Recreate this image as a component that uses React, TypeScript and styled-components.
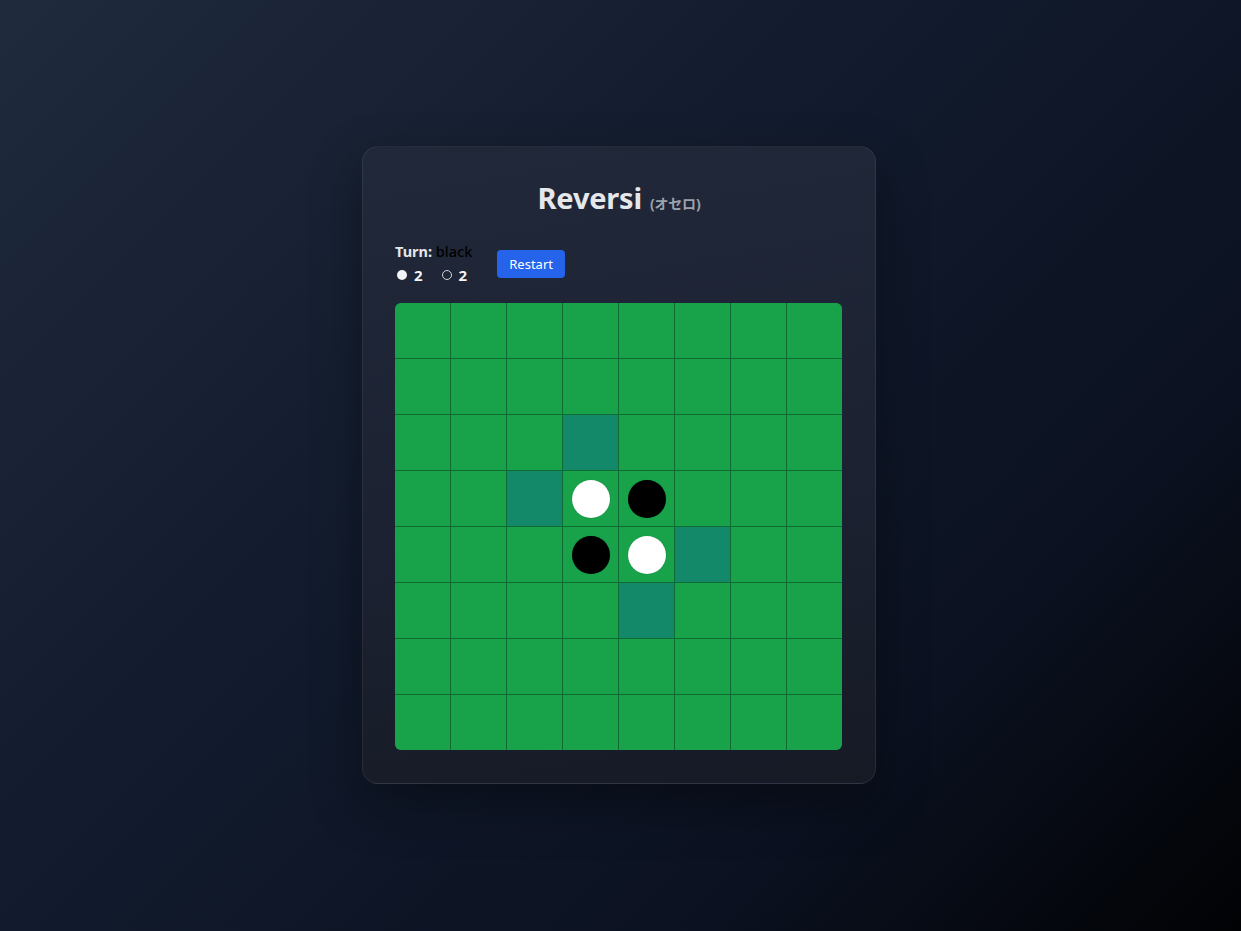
import React from "react";
import styled, { createGlobalStyle } from "styled-components";

const GlobalStyle = createGlobalStyle`
  html, body { margin: 0; padding: 0; }
  body {
    min-height: 100vh;
    font-family: "Noto Sans", "Noto Sans CJK JP", "Liberation Sans", sans-serif;
    background: linear-gradient(135deg, #1f2a3c 0%, #111a2c 45%, #0b1120 75%, #010204 100%);
    color: #e5e7eb;
    overflow: hidden;
  }
`;

const Page = styled.div`
  width: 100%;
  height: 100vh;
  display: flex;
  justify-content: center;
  align-items: flex-start;
  padding: 146px 3px 0 0;
  box-sizing: border-box;
`;

const Card = styled.div`
  width: 514px;
  box-sizing: border-box;
  padding: 33px 32px 33px 32px;
  border-radius: 16px;
  border: 1px solid rgba(255, 255, 255, 0.07);
  background: linear-gradient(170deg, #212839 0%, #1c2232 55%, #161a25 100%);
  box-shadow: 0 20px 50px rgba(0, 0, 0, 0.35);
  display: flex;
  flex-direction: column;
`;

const Title = styled.h1`
  margin: 0;
  text-align: center;
  font-size: 29px;
  line-height: 36px;
  font-weight: 700;
  color: #e5e7eb;
  letter-spacing: -0.2px;
`;

const Sub = styled.span`
  font-size: 14px;
  font-weight: 700;
  color: #9ca3af;
  margin-left: 8px;
`;

const Controls = styled.div`
  display: flex;
  align-items: center;
  gap: 25px;
  margin-top: 20px;
`;

const Status = styled.div`
  display: flex;
  flex-direction: column;
  font-size: 14.5px;
`;

const TurnLine = styled.div`
  line-height: 18px;
  font-weight: 700;
  color: #e5e7eb;
`;

const TurnValue = styled.span`
  color: #000;
  font-weight: 500;
`;

const Scores = styled.div`
  display: flex;
  align-items: center;
  gap: 19px;
  margin-top: 5px;
  line-height: 20px;
  padding-left: 2px;
`;

const Score = styled.span`
  display: inline-flex;
  align-items: center;
  gap: 7px;
  font-weight: 700;
  font-size: 15px;
  color: #f3f4f6;
`;

const Dot = styled.span<{ $filled: boolean }>`
  width: 10px;
  height: 10px;
  border-radius: 50%;
  box-sizing: border-box;
  background: ${(p) => (p.$filled ? "#f3f4f6" : "transparent")};
  border: ${(p) => (p.$filled ? "none" : "1.5px solid #d1d5db")};
`;

const Button = styled.button`
  height: 28px;
  padding: 0 12px;
  border: none;
  border-radius: 4px;
  background: #2563eb;
  color: #fff;
  font-family: inherit;
  font-size: 13px;
  cursor: pointer;
`;

const Board = styled.div`
  margin-top: 18px;
  display: grid;
  grid-template-columns: repeat(8, 55px);
  grid-auto-rows: 55px;
  gap: 1px;
  width: 447px;
  background: #106a34;
  border-radius: 6px;
  overflow: hidden;
`;

const Cell = styled.div<{ $hint: boolean }>`
  background: ${(p) => (p.$hint ? "#13896a" : "#18a34a")};
  display: flex;
  align-items: center;
  justify-content: center;
`;

const Piece = styled.div<{ $color: "w" | "b" }>`
  width: 38px;
  height: 38px;
  border-radius: 50%;
  background: ${(p) => (p.$color === "w" ? "#ffffff" : "#000000")};
  box-shadow: 0 0 1px rgba(0, 0, 0, 0.3);
`;

const pieces: Record<string, "w" | "b"> = {
  "3-3": "w",
  "3-4": "b",
  "4-3": "b",
  "4-4": "w",
};
const hints = new Set(["2-3", "3-2", "4-5", "5-4"]);

export default function App() {
  const cells = [];
  for (let r = 0; r < 8; r++) {
    for (let c = 0; c < 8; c++) {
      const k = `${r}-${c}`;
      cells.push(
        <Cell key={k} $hint={hints.has(k)}>
          {pieces[k] && <Piece $color={pieces[k]} />}
        </Cell>
      );
    }
  }
  return (
    <>
      <GlobalStyle />
      <Page>
        <Card>
          <Title>
            Reversi<Sub>(オセロ)</Sub>
          </Title>
          <Controls>
            <Status>
              <TurnLine>
                Turn: <TurnValue>black</TurnValue>
              </TurnLine>
              <Scores>
                <Score>
                  <Dot $filled />2
                </Score>
                <Score>
                  <Dot $filled={false} />2
                </Score>
              </Scores>
            </Status>
            <Button>Restart</Button>
          </Controls>
          <Board>{cells}</Board>
        </Card>
      </Page>
    </>
  );
}
